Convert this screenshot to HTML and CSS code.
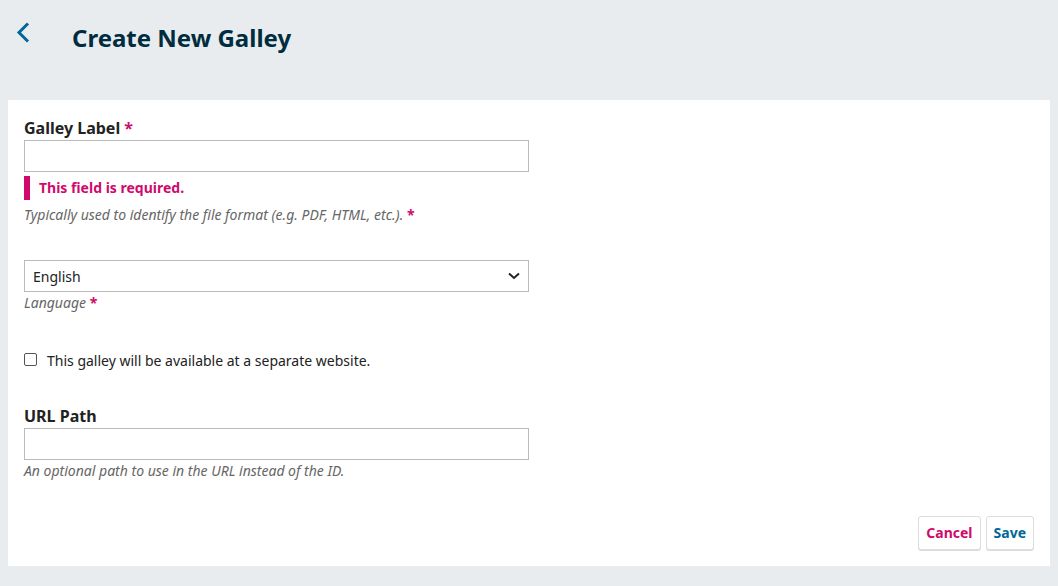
FILE: index.html
```html
<!DOCTYPE html>
<html lang="en">
<head>
<meta charset="utf-8">
<title>Create New Galley</title>
<link rel="stylesheet" href="styles.css">
</head>
<body>
<div class="page">
  <header class="header">
    <button class="back" aria-label="Back">
      <svg width="14" height="21" viewBox="0 0 14 21"><path d="M12 1.5 L3 10.5 L12 19.5" fill="none" stroke="#006798" stroke-width="3"/></svg>
    </button>
    <h1 class="title">Create New Galley</h1>
  </header>
  <main class="panel">
    <form class="form">
      <div class="field field-label">
        <label class="label">Galley Label <span class="req">*</span></label>
        <input class="input" type="text">
        <div class="error">This field is required.</div>
        <div class="desc">Typically used to identify the file format (e.g. PDF, HTML, etc.). <span class="req">*</span></div>
      </div>
      <div class="field field-lang">
        <div class="select">
          <span>English</span>
          <svg width="12" height="8" viewBox="0 0 12 8"><path d="M1 1.5 L6 6 L11 1.5" fill="none" stroke="#222" stroke-width="2"/></svg>
        </div>
        <div class="desc desc-lang">Language <span class="req">*</span></div>
      </div>
      <div class="field field-check">
        <label class="check"><span class="box"></span>This galley will be available at a separate website.</label>
      </div>
      <div class="field field-url">
        <label class="label">URL Path</label>
        <input class="input" type="text">
        <div class="desc desc-url">An optional path to use in the URL instead of the ID.</div>
      </div>
      <div class="actions">
        <button type="button" class="btn btn-cancel">Cancel</button>
        <button type="button" class="btn btn-save">Save</button>
      </div>
    </form>
  </main>
</div>
</body>
</html>
```
FILE: styles.css
```css
* { box-sizing: border-box; }
html, body { margin: 0; padding: 0; }
body {
  background: #e9ecee;
  font-family: "Noto Sans", sans-serif;
  color: #222;
  width: 1058px;
  height: 586px;
  overflow: hidden;
}
.page { padding: 0 8px; }
.header {
  height: 100px;
  display: flex;
  align-items: flex-start;
  padding-top: 22px;
}
.back {
  background: none;
  border: 0;
  padding: 0;
  margin: 0 0 0 8px;
  width: 14px;
  height: 21px;
  display: flex;
  align-items: center;
  justify-content: center;
}
.title {
  margin: 0 0 0 42px;
  font-size: 24px;
  font-weight: 700;
  color: #002c40;
  line-height: 32px;
}
.panel {
  background: #fff;
  height: 466px;
  padding: 16px 16px 16px 16px;
}
.form { display: flex; flex-direction: column; height: 100%; }
.field { display: flex; flex-direction: column; width: 505px; }
.label {
  font-weight: 700;
  font-size: 16px;
  line-height: 24px;
  color: #222;
}
.req { color: #d00a6c; font-style: normal; font-weight: 700; }
.input {
  height: 32px;
  border: 1px solid #bbb;
  border-radius: 0;
  margin-top: 0;
  font: inherit;
}
.error {
  margin-top: 4px;
  border-left: 6px solid #d00a6c;
  padding-left: 9px;
  color: #d00a6c;
  font-weight: 700;
  font-size: 14px;
  line-height: 24px;
}
.desc {
  font-style: italic;
  color: #666;
  font-size: 14px;
  line-height: 20px;
  margin-top: 5px;
}
.field-lang { margin-top: 35px; }
.select {
  height: 32px;
  border: 1px solid #bbb;
  display: flex;
  align-items: center;
  justify-content: space-between;
  padding: 0 8px 0 8px;
  font-size: 14px;
  color: #222;
}
.desc-lang { margin-top: 1px; }
.field-check { margin-top: 38px; }
.check {
  display: flex;
  align-items: center;
  font-size: 14px;
  line-height: 20px;
  color: #222;
}
.box {
  width: 13px;
  height: 13px;
  border: 1px solid #555;
  border-radius: 2px;
  margin-right: 10px;
  margin-top: -3px;
  background: #fff;
}
.field-url { margin-top: 33px; }
.desc-url { margin-top: 1px; }
.actions {
  margin-top: auto;
  display: flex;
  justify-content: flex-end;
  gap: 5px;
}
.btn {
  height: 34px;
  padding: 0 7px 1px;
  background: #fff;
  border: 1px solid #ddd;
  box-shadow: 0 1px 0 #ddd;
  border-radius: 3px;
  font-family: "Noto Sans", sans-serif;
  font-weight: 700;
  font-size: 14px;
}
.btn-cancel { color: #d00a6c; }
.btn-save { color: #006798; }
```
